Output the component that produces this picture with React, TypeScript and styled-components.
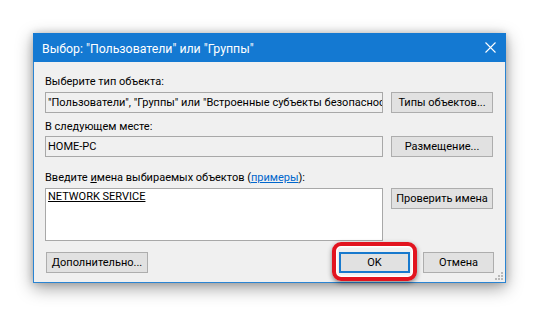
import React from "react";
import styled, { createGlobalStyle } from "styled-components";

const GlobalStyle = createGlobalStyle`
  html, body { margin: 0; padding: 0; background: #ffffff; }
  body { font-family: "Segoe UI", Roboto, "Noto Sans", sans-serif; font-size: 11px; color: #000; }
  * { box-sizing: border-box; }
`;

const Page = styled.div`
  padding: 33px 0 0 33px;
  width: 539px;
  height: 317px;
`;

const Window = styled.div`
  position: relative;
  width: 473px;
  border: 1px solid #2a84d2;
  background: #f0f0f0;
  box-shadow: 0 5px 16px rgba(0, 0, 0, 0.38), 0 0 7px rgba(0, 0, 0, 0.18);
`;

const TitleBar = styled.div`
  height: 29px;
  margin: -1px -1px 0 -1px;
  background: #1479d2;
  display: flex;
  align-items: center;
  justify-content: space-between;
  padding: 0 10px 0 9px;
  color: #ffffff;
  font-size: 12.3px;
`;

const Title = styled.span`
  line-height: 16px;
  margin-top: 2px;
`;

const Body = styled.div`
  padding: 12px 11px 9px 11px;
  display: flex;
  flex-direction: column;
`;

const Label = styled.div<{ $mt?: number }>`
  margin-top: ${(p) => p.$mt ?? 0}px;
  line-height: 15px;
  height: 15px;
  white-space: nowrap;
`;

const Row = styled.div<{ $mt: number }>`
  display: flex;
  gap: 8px;
  margin-top: ${(p) => p.$mt}px;
  align-items: flex-start;
`;

const Field = styled.div`
  flex: 0 0 338px;
  height: 21px;
  border: 1px solid #a8a8a8;
  background: #f0f0f0;
  padding: 0 2px;
  line-height: 19px;
  white-space: nowrap;
  overflow: hidden;
`;

const TextArea = styled.div`
  flex: 0 0 338px;
  height: 53px;
  border: 1px solid #a8a8a8;
  background: #ffffff;
  padding: 0 2px;
  line-height: 16px;
`;

const Entry = styled.span`
  text-decoration: underline;
`;

const Link = styled.span`
  color: #0066cc;
  text-decoration: underline;
`;

const Button = styled.div<{ $w: number; $default?: boolean }>`
  width: ${(p) => p.$w}px;
  height: 21px;
  border: ${(p) => (p.$default ? "2px solid #1879cd" : "1px solid #adadad")};
  background: #e1e1e1;
  display: flex;
  align-items: center;
  justify-content: center;
  white-space: nowrap;
  line-height: 15px;
`;

const Footer = styled.div`
  display: flex;
  align-items: center;
  margin-top: 11px;
  padding-left: 1px;
`;

const Spacer = styled.div`
  flex: 1;
`;

const Highlight = styled.div`
  position: relative;
  margin-right: 13px;
`;

const RedRing = styled.div`
  position: absolute;
  top: -10px;
  bottom: -8px;
  left: -7px;
  right: -7px;
  border: 4px solid #e2141f;
  border-radius: 9px;
  box-shadow: inset 0 0 0 1.5px #ffffff, 0 2px 5px rgba(0, 0, 0, 0.45);
  pointer-events: none;
`;

const Grip = styled.svg`
  position: absolute;
  right: 2px;
  bottom: 2px;
`;

function CloseIcon() {
  return (
    <svg width="11" height="11" viewBox="0 0 11 11">
      <path d="M0.5 0.5 L10.5 10.5 M10.5 0.5 L0.5 10.5" stroke="#ffffff" strokeWidth="1.1" fill="none" />
    </svg>
  );
}

export default function App() {
  return (
    <>
      <GlobalStyle />
      <Page>
        <Window>
          <TitleBar>
            <Title>Выбор: "Пользователи" или "Группы"</Title>
            <CloseIcon />
          </TitleBar>
          <Body>
            <Label>Выберите тип объекта:</Label>
            <Row $mt={3}>
              <Field>"Пользователи", "Группы" или "Встроенные субъекты безопасности"</Field>
              <Button $w={102}>Типы объектов...</Button>
            </Row>
            <Label $mt={6}>В следующем месте:</Label>
            <Row $mt={2}>
              <Field>HOME-PC</Field>
              <Button $w={102}>Размещение...</Button>
            </Row>
            <Label $mt={13}>
              Введите <u>и</u>мена выбираемых объектов (<Link>примеры</Link>):
            </Label>
            <Row $mt={3}>
              <TextArea>
                <Entry>NETWORK SERVICE</Entry>
              </TextArea>
              <Button $w={102}>Проверить имена</Button>
            </Row>
            <Footer>
              <Button $w={102}>Дополнительно...</Button>
              <Spacer />
              <Highlight>
                <Button $w={71} $default>OK</Button>
                <RedRing />
              </Highlight>
              <Button $w={71}>Отмена</Button>
            </Footer>
          </Body>
          <Grip width="10" height="10" viewBox="0 0 10 10">
            <rect x="8" y="2" width="2" height="2" fill="#b9b9b9" />
            <rect x="5" y="5" width="2" height="2" fill="#b9b9b9" />
            <rect x="8" y="5" width="2" height="2" fill="#b9b9b9" />
            <rect x="2" y="8" width="2" height="2" fill="#b9b9b9" />
            <rect x="5" y="8" width="2" height="2" fill="#b9b9b9" />
            <rect x="8" y="8" width="2" height="2" fill="#b9b9b9" />
          </Grip>
        </Window>
      </Page>
    </>
  );
}
